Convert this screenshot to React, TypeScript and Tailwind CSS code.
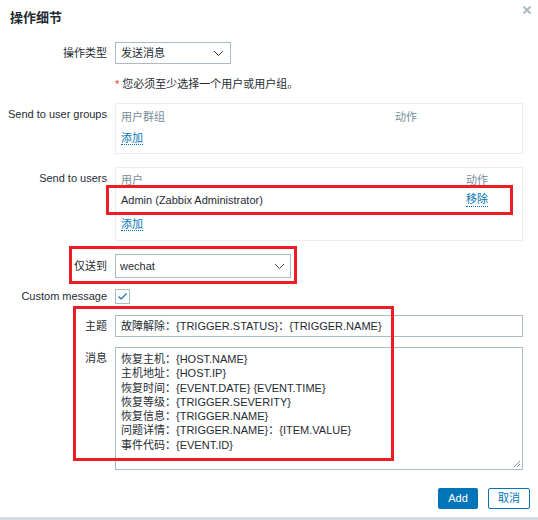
import React from "react";

const Chevron = () => (
  <svg width="11" height="7" viewBox="0 0 11 7" className="shrink-0">
    <path d="M1 1 L5.5 5.5 L10 1" fill="none" stroke="#3d4a52" strokeWidth="1" />
  </svg>
);

const Label = ({ children, className = "" }: { children: React.ReactNode; className?: string }) => (
  <div className={`w-[107px] shrink-0 text-right whitespace-nowrap ${className}`}>{children}</div>
);

const lines = [
  "恢复主机：{HOST.NAME}",
  "主机地址：{HOST.IP}",
  "恢复时间：{EVENT.DATE} {EVENT.TIME}",
  "恢复等级：{TRIGGER.SEVERITY}",
  "恢复信息：{TRIGGER.NAME}",
  "问题详情：{TRIGGER.NAME}：{ITEM.VALUE}",
  "事件代码：{EVENT.ID}",
];

export default function App() {
  return (
    <div
      className="relative w-[538px] h-[520px] bg-white text-[11px] text-[#1f2c33] overflow-hidden"
      style={{ fontFamily: '"Liberation Sans", Arial, "Noto Sans CJK SC", sans-serif' }}
    >
      {/* header */}
      <div className="flex items-start justify-between pl-[10px] pr-[4px] pt-[8px] h-[42px]">
        <div className="text-[13px] font-bold text-[#1f2c33]">操作细节</div>
        <svg width="10" height="10" viewBox="0 0 10 10" className="mt-[-3px] mr-[2px]">
          <path d="M1.5 1.5 L8.5 8.5 M8.5 1.5 L1.5 8.5" stroke="#aebbc4" strokeWidth="2" />
        </svg>
      </div>

      {/* 操作类型 */}
      <div className="flex items-center gap-[8px] h-[22px]">
        <Label>操作类型</Label>
        <div className="w-[116px] h-[22px] border border-[#acbbc2] flex items-center justify-between pl-[5px] pr-[6px]">
          <span>发送消息</span>
          <Chevron />
        </div>
      </div>

      {/* note */}
      <div className="flex mt-[13px] h-[14px] items-center">
        <div className="w-[115px] shrink-0" />
        <div>
          <span className="text-[#e33734]">*</span> 您必须至少选择一个用户或用户组。
        </div>
      </div>

      {/* user groups */}
      <div className="flex gap-[8px] mt-[12px]">
        <Label className="pt-[3px]">Send to user groups</Label>
        <div className="w-[408px] h-[51px] border border-[#ebeef0] px-[5px] pt-[6px]">
          <div className="flex text-[#768d99] h-[14px] items-center">
            <div className="w-[274px]">用户群组</div>
            <div>动作</div>
          </div>
          <div className="mt-[6px]">
            <span className="text-[#0275b8] border-b border-dotted border-[#0275b8]">添加</span>
          </div>
        </div>
      </div>

      {/* users */}
      <div className="flex gap-[8px] mt-[13px]">
        <Label className="pt-[3px]">Send to users</Label>
        <div className="w-[408px] h-[74px] border border-[#ebeef0] px-[5px] pt-[5px]">
          <div className="flex justify-between text-[#768d99] h-[14px] items-center pr-[29px]">
            <div>用户</div>
            <div>动作</div>
          </div>
          <div className="flex justify-between h-[14px] items-center mt-[6px] pr-[29px]">
            <div>Admin (Zabbix Administrator)</div>
            <span className="text-[#0275b8] border-b border-dotted border-[#0275b8] leading-[13px]">移除</span>
          </div>
          <div className="mt-[9px]">
            <span className="text-[#0275b8] border-b border-dotted border-[#0275b8]">添加</span>
          </div>
        </div>
      </div>

      {/* 仅送到 */}
      <div className="flex items-center gap-[8px] mt-[13px] h-[24px]">
        <Label>仅送到</Label>
        <div className="w-[176px] h-[24px] border border-[#acbbc2] flex items-center justify-between pl-[4px] pr-[5px]">
          <span>wechat</span>
          <Chevron />
        </div>
      </div>

      {/* custom message */}
      <div className="flex items-center gap-[8px] mt-[10px] h-[16px]">
        <Label>Custom message</Label>
        <div className="w-[15px] h-[15px] border border-[#acbbc2] flex items-center justify-center">
          <svg width="11" height="9" viewBox="0 0 11 9">
            <path d="M1.5 4.5 L4.2 7 L9.5 1.5" fill="none" stroke="#0275b8" strokeWidth="1.2" />
          </svg>
        </div>
      </div>

      {/* subject */}
      <div className="flex items-center gap-[8px] mt-[11px] h-[22px]">
        <Label>主题</Label>
        <div className="w-[408px] h-[22px] border border-[#acbbc2] flex items-center pl-[5px]">
          故障解除：{"{TRIGGER.STATUS}"}：{"{TRIGGER.NAME}"}
        </div>
      </div>

      {/* message */}
      <div className="flex gap-[8px] mt-[10px]">
        <Label className="pt-[3px]">消息</Label>
        <div className="relative w-[408px] h-[123px] border border-[#acbbc2] pl-[5px] pt-[4px]">
          {lines.map((l) => (
            <div key={l} className="leading-[14.3px]">{l}</div>
          ))}
          <svg width="8" height="8" viewBox="0 0 8 8" className="absolute right-[1px] bottom-[1px]">
            <path d="M7 1 L1 7 M7 4 L4 7" stroke="#6e7a80" strokeWidth="0.8" />
          </svg>
        </div>
      </div>

      {/* buttons */}
      <div className="flex justify-end gap-[10px] pr-[8px] mt-[18px]">
        <div className="w-[40px] h-[21px] bg-[#0275b8] text-white flex items-center justify-center rounded-[2px]">
          Add
        </div>
        <div className="w-[42px] h-[21px] border border-[#0275b8] text-[#0275b8] flex items-center justify-center rounded-[2px]">
          取消
        </div>
      </div>

      {/* bottom bar */}
      <div className="absolute left-0 right-0 bottom-0 h-[3px] bg-[#d7dde0]" />

      {/* red annotation boxes */}
      <div className="absolute left-[106px] top-[185px] w-[407px] h-[30px] border-[3px] border-[#ee1c25]" />
      <div className="absolute left-[69px] top-[246px] w-[228px] h-[38px] border-[3px] border-[#ee1c25]" />
      <div className="absolute left-[73px] top-[306px] w-[321px] h-[155px] border-[3px] border-[#ee1c25]" />
    </div>
  );
}
